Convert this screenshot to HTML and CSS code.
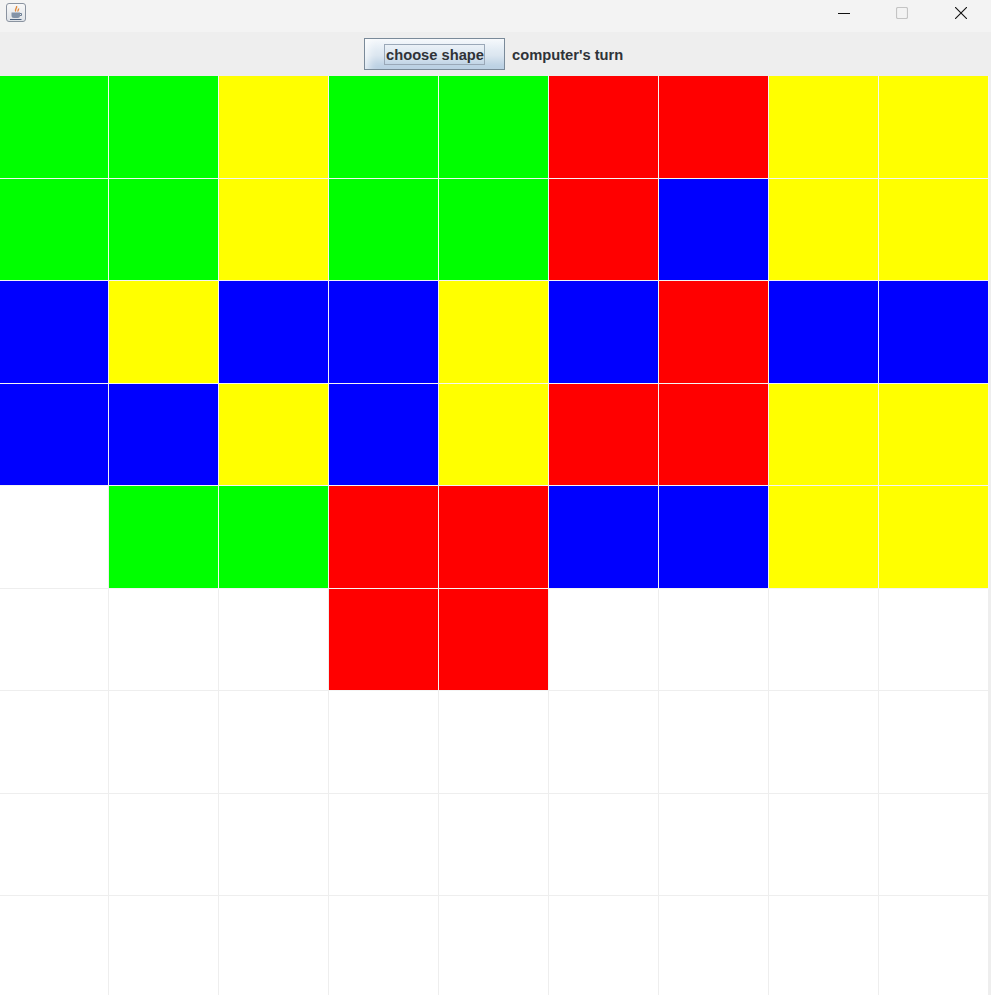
FILE: index.html
```html
<!DOCTYPE html>
<html lang="en">
<head>
  <meta charset="UTF-8" />
  <title>choose shape</title>
  <link rel="stylesheet" href="styles.css">
</head>
<body>
  <div class="titlebar">
    <div class="app-icon">
      <svg width="16" height="16" viewBox="0 0 16 16">
        <path d="M8.500 1c1 2-2 3-.8 5.500M10.500 3.500c.5 1.200-1 1.800-.5 3" fill="none" stroke="#e08a3c" stroke-width="1.400"/>
        <path d="M3.500 7.500h8.500v3a2.500 2.500 0 0 1-2.500 2.500H6a2.500 2.500 0 0 1-2.500-2.500z" fill="#8494a8"/>
        <path d="M12 8.500h1.500v2H12" fill="none" stroke="#6b7d92" stroke-width="1"/>
        <path d="M2 14.500h11.500" stroke="#4f6580" stroke-width="1"/>
      </svg>
    </div>
    <div class="win-buttons">
      <span class="win-btn">
        <svg width="12" height="12" viewBox="0 0 12 12"><path d="M0 6.500h12" stroke="#111" stroke-width="1"/></svg>
      </span>
      <span class="win-btn">
        <svg width="12" height="12" viewBox="0 0 12 12"><rect x=".5" y=".5" width="11" height="11" rx="1.500" fill="none" stroke="#c4c4c4" stroke-width="1.200"/></svg>
      </span>
      <span class="win-btn close">
        <svg width="12" height="12" viewBox="0 0 12 12"><path d="M0 0l12 12M12 0L0 12" stroke="#111" stroke-width="1.100"/></svg>
      </span>
    </div>
  </div>

  <div class="toolbar">
    <button class="shape-btn" type="button"><span class="focus-ring">choose shape</span></button>
    <span class="turn-label">computer's turn</span>
  </div>

  <div class="board" id="board"></div>

  <script>
  // g green, y yellow, r red, b blue, . empty
  var rows = [
    'ggyggrryy',
    'ggyggrbyy',
    'bybbybrbb',
    'bbybyrryy',
    '.ggrrbbyy',
    '...rr....',
    '.........',
    '.........',
    '.........'
  ];
  var colors = { g: 'green', y: 'yellow', r: 'red', b: 'blue' };
  var board = document.getElementById('board');
  rows.forEach(function (row) {
    row.split('').forEach(function (c) {
      var div = document.createElement('div');
      div.className = 'cell ' + (colors[c] || 'empty');
      board.appendChild(div);
    });
  });
  </script>
</body>
</html>
```

FILE: styles.css
```css
html, body {
  margin: 0;
  height: 100%;
  overflow: hidden;
}

body {
  font-family: "Liberation Sans", Arial, sans-serif;
  background-color: #eeeeee;
}

.titlebar {
  height: 32px;
  background-color: #f3f3f3;
  display: flex;
  justify-content: space-between;
}

.app-icon {
  width: 20px;
  height: 19px;
  margin: 3px 0 0 6px;
  border: 1px solid #8a93a0;
  border-radius: 3px;
  background: linear-gradient(#f8f8f8, #dfe3e8);
  box-sizing: border-box;
  display: flex;
  align-items: center;
  justify-content: center;
}

.win-buttons {
  display: flex;
  padding-right: 1px;
}

.win-btn {
  width: 58px;
  height: 26px;
  display: flex;
  align-items: center;
  justify-content: center;
}

.win-btn.close {
  margin-left: 1px;
}

.toolbar {
  height: 44px;
  display: flex;
  align-items: flex-start;
  gap: 7px;
  padding-left: 364px;
  box-sizing: border-box;
}

.shape-btn {
  width: 141px;
  height: 32px;
  margin-top: 6px;
  padding: 0;
  border: 1px solid #7a8a99;
  background: linear-gradient(#f6f9fc, #e3ecf4 35%, #dbe6f0 55%, #b3cbe0);
  box-shadow: inset 8px 0 8px -4px rgba(255, 255, 255, 0.7);
  display: flex;
  align-items: center;
  justify-content: center;
  font-family: inherit;
}

.focus-ring {
  box-sizing: border-box;
  width: 101px;
  height: 21px;
  border: 1px solid #9aa8b8;
  line-height: 21px;
  padding-left: 1px;
  font-size: 14.700px;
  font-weight: bold;
  color: #2f3338;
  text-align: center;
  white-space: nowrap;
}

.turn-label {
  font-size: 14.700px;
  font-weight: bold;
  color: #2f3338;
  line-height: 46px;
}

.board {
  width: 988px;
  display: grid;
  grid-template-columns: 109px repeat(8, 110px);
  grid-template-rows: repeat(4, 103px 102px) 103px;
  background-color: #ffffff;
}

.cell {
  box-sizing: border-box;
  border-right: 1px solid #f4f4f4;
  border-bottom: 1px solid #f4f4f4;
}

.green { background-color: #00ff00; }
.yellow { background-color: #ffff00; }
.red { background-color: #ff0000; }
.blue { background-color: #0000ff; }
.empty { background-color: #ffffff; border-color: #eeeeee; }
```
